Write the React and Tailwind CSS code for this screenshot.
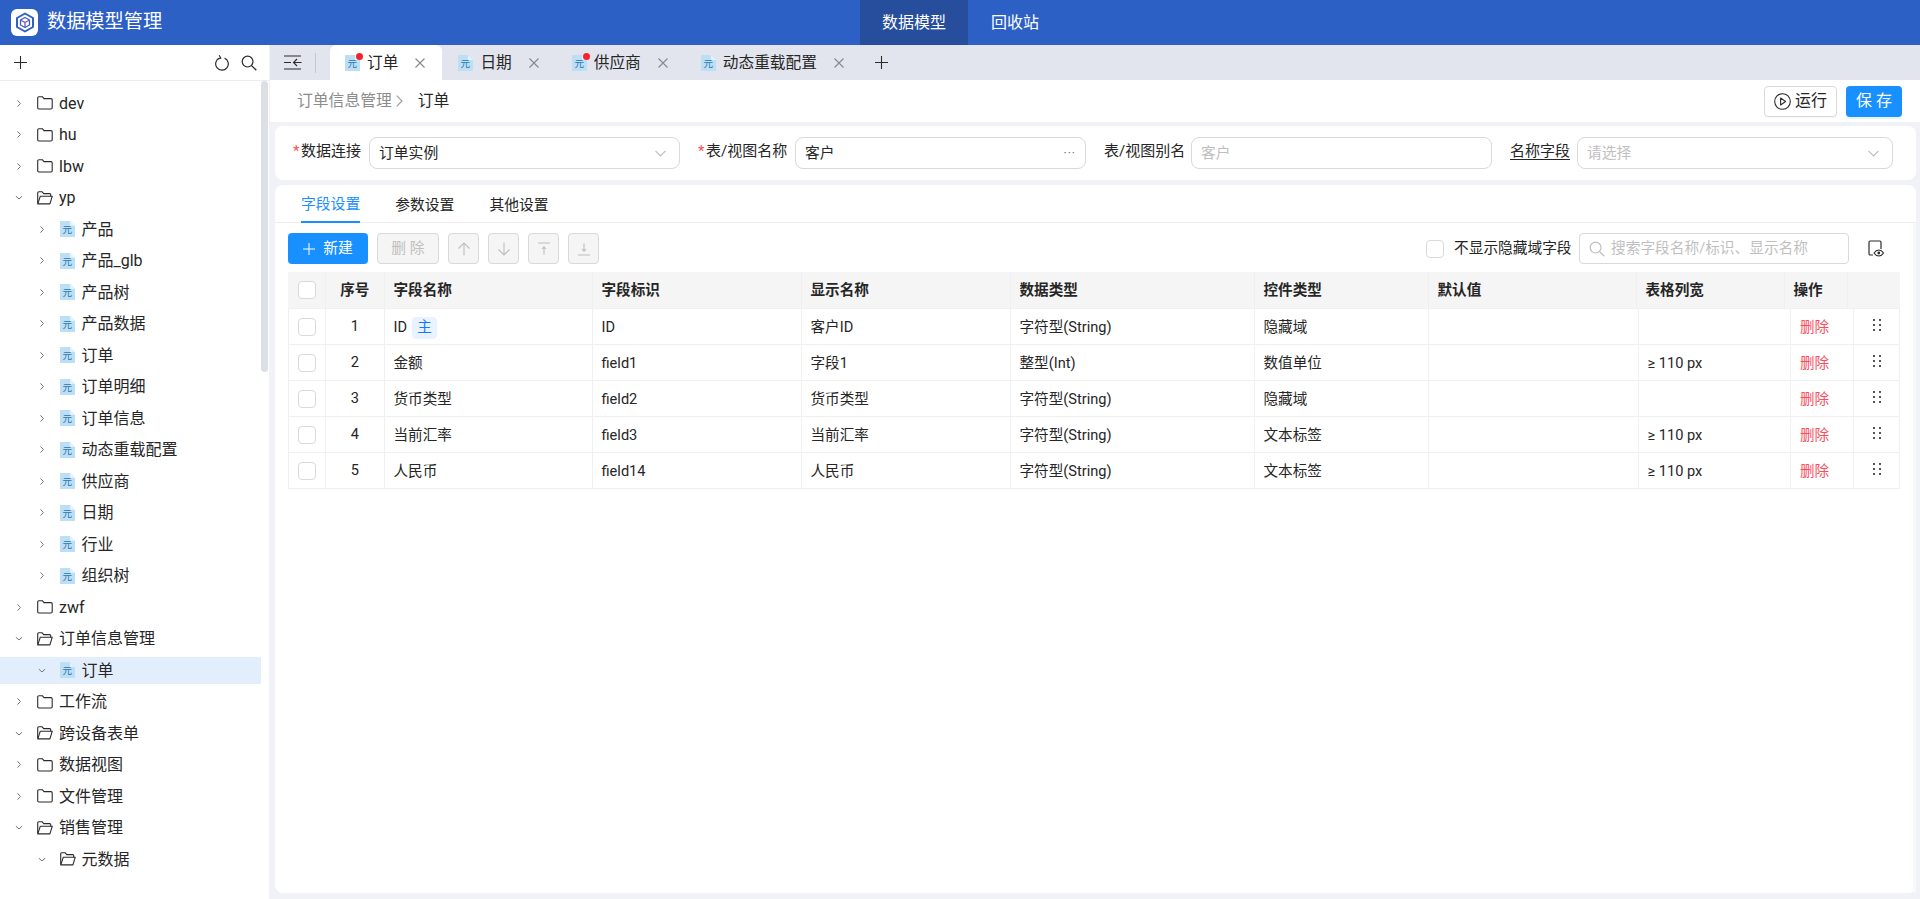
import React from 'react';

const FONT = { fontFamily: 'Roboto, "Noto Sans CJK SC", sans-serif' };

const tree = [
  { name: 'dev', level: 0, type: 'folder' },
  { name: 'hu', level: 0, type: 'folder' },
  { name: 'lbw', level: 0, type: 'folder' },
  { name: 'yp', level: 0, type: 'open' },
  { name: '产品', level: 1, type: 'file' },
  { name: '产品_glb', level: 1, type: 'file' },
  { name: '产品树', level: 1, type: 'file' },
  { name: '产品数据', level: 1, type: 'file' },
  { name: '订单', level: 1, type: 'file' },
  { name: '订单明细', level: 1, type: 'file' },
  { name: '订单信息', level: 1, type: 'file' },
  { name: '动态重载配置', level: 1, type: 'file' },
  { name: '供应商', level: 1, type: 'file' },
  { name: '日期', level: 1, type: 'file' },
  { name: '行业', level: 1, type: 'file' },
  { name: '组织树', level: 1, type: 'file' },
  { name: 'zwf', level: 0, type: 'folder' },
  { name: '订单信息管理', level: 0, type: 'open' },
  { name: '订单', level: 1, type: 'file', selected: true, down: true },
  { name: '工作流', level: 0, type: 'folder' },
  { name: '跨设备表单', level: 0, type: 'open' },
  { name: '数据视图', level: 0, type: 'folder' },
  { name: '文件管理', level: 0, type: 'folder' },
  { name: '销售管理', level: 0, type: 'open' },
  { name: '元数据', level: 1, type: 'open' },
];

const tabs = [
  { name: '订单', active: true, dot: true },
  { name: '日期' },
  { name: '供应商', dot: true },
  { name: '动态重载配置' },
];

const headers = ['字段名称', '字段标识', '显示名称', '数据类型', '控件类型', '默认值', '表格列宽', '操作'];

const rows = [
  { no: 1, name: 'ID', main: true, key: 'ID', label: '客户ID', type: '字符型(String)', ctrl: '隐藏域', width: '' },
  { no: 2, name: '金额', key: 'field1', label: '字段1', type: '整型(Int)', ctrl: '数值单位', width: '≥ 110 px' },
  { no: 3, name: '货币类型', key: 'field2', label: '货币类型', type: '字符型(String)', ctrl: '隐藏域', width: '' },
  { no: 4, name: '当前汇率', key: 'field3', label: '当前汇率', type: '字符型(String)', ctrl: '文本标签', width: '≥ 110 px' },
  { no: 5, name: '人民币', key: 'field14', label: '人民币', type: '字符型(String)', ctrl: '文本标签', width: '≥ 110 px' },
];

function Logo() {
  return (
    <div className="w-[27px] h-[27px] bg-white rounded-[6px] flex items-center justify-center">
      <svg width="20" height="21" viewBox="0 0 20 21" fill="none" strokeLinejoin="round">
        <path d="M10 1.5L18 6v9l-8 4.5L2 15V6z" stroke="#2d60c4" strokeWidth="2" />
        <path d="M10 5.5L14.5 8v5L10 15.5 5.5 13V8z" stroke="#3d5fc9" strokeWidth="1.3" />
        <path d="M5.5 8L10 10.5 14.5 8M10 10.5v5" stroke="#7a4fc0" strokeWidth="1.3" />
      </svg>
    </div>
  );
}

function Chevron({ down }) {
  return down ? (
    <svg width="9" height="9" viewBox="0 0 9 9" fill="none"><path d="M1 3l3.5 3.2L8 3" stroke="#6f7276" strokeWidth="1.1" /></svg>
  ) : (
    <svg width="9" height="9" viewBox="0 0 9 9" fill="none"><path d="M2.8 1l3.3 3.5L2.8 8" stroke="#6f7276" strokeWidth="1.1" /></svg>
  );
}

function Folder() {
  return (
    <svg width="16" height="14" viewBox="0 0 16 14" fill="none">
      <path d="M.7 2c0-.7.5-1.2 1.2-1.2h3.6L7 2.6h7c.7 0 1.2.5 1.2 1.2v8c0 .7-.5 1.2-1.2 1.2H1.9c-.7 0-1.2-.5-1.2-1.2z" stroke="#2b2b2b" strokeWidth="1.1" />
    </svg>
  );
}

function FolderOpen() {
  return (
    <svg width="16" height="14" viewBox="0 0 16 14" fill="none" strokeLinejoin="round">
      <path d="M.7 12.6V1.8C.7 1.2 1.2.8 1.8.8h3.4l1.5 1.8h6c.6 0 1 .4 1 1v1.6" stroke="#2b2b2b" strokeWidth="1.1" />
      <path d="M.8 12.9L3.3 5.2h12l-2.4 7.7z" stroke="#2b2b2b" strokeWidth="1.1" />
    </svg>
  );
}

function FileIcon() {
  return (
    <svg width="15" height="16" viewBox="0 0 15 16">
      <path d="M0 0h10l5 5v11H0z" fill="#bcdff5" />
      <path d="M10 0l5 5h-5z" fill="#e3f2fb" />
      <text x="7.2" y="12.4" textAnchor="middle" fontSize="9.5" fill="#1f75ae" fontFamily='"Noto Sans CJK SC", sans-serif'>元</text>
    </svg>
  );
}

function Close() {
  return (
    <svg width="10" height="10" viewBox="0 0 10 10" fill="none"><path d="M.5.5l9 9M9.5.5l-9 9" stroke="#85878a" strokeWidth="1.1" /></svg>
  );
}

function PlusIcon({ size = 13, color = '#2b2b2b' }) {
  return (
    <svg width={size} height={size} viewBox="0 0 13 13" fill="none"><path d="M6.5 0v13M0 6.5h13" stroke={color} strokeWidth="1.1" /></svg>
  );
}

function SearchIcon({ color = '#2b2b2b' }) {
  return (
    <svg width="16" height="16" viewBox="0 0 16 16" fill="none">
      <circle cx="6.6" cy="6.6" r="5.4" stroke={color} strokeWidth="1.2" />
      <path d="M10.6 10.6l4.7 4.7" stroke={color} strokeWidth="1.3" />
    </svg>
  );
}

function SelectArrow() {
  return (
    <svg width="11" height="7" viewBox="0 0 11 7" fill="none"><path d="M.5.8l5 5.2 5-5.2" stroke="#bdbdbd" strokeWidth="1.1" /></svg>
  );
}

function TreeRow({ item }) {
  const open = item.type === 'open';
  return (
    <div className="h-[31.5px] flex items-center">
      <div className={`w-full h-[27px] flex items-center ${item.selected ? 'bg-[#e3eefc]' : ''}`}>
        <div className={`flex items-center ${item.level ? 'pl-[37.5px]' : 'pl-[15px]'}`}>
          <span className="w-[8px] flex justify-center"><Chevron down={open || item.down} /></span>
          <span className="ml-[14px] w-[16px] flex justify-center">
            {item.type === 'file' ? <FileIcon /> : open ? <FolderOpen /> : <Folder />}
          </span>
          <span className="ml-[6px] pt-[1px] text-[16px] text-[#262626] whitespace-nowrap">{item.name}</span>
        </div>
      </div>
    </div>
  );
}

function Sidebar() {
  return (
    <aside className="w-[269px] shrink-0 bg-white flex flex-col">
      <div className="h-[36px] shrink-0 border-b border-[#ededed] flex items-center justify-between pl-[14px] pr-[12px]">
        <PlusIcon />
        <div className="flex items-center gap-[11px]">
          <svg width="15" height="17" viewBox="0 0 15 17" fill="none">
            <path d="M4.6 4a6.3 6.3 0 1 0 5 .1" stroke="#2b2b2b" strokeWidth="1.2" />
            <path d="M4.2 1.2l1.6 2.9-3 .9" stroke="#2b2b2b" strokeWidth="1.1" />
          </svg>
          <SearchIcon />
        </div>
      </div>
      <div className="flex flex-1">
        <div className="w-[261px] pt-[6.5px]">
          {tree.map((item, i) => <TreeRow key={i} item={item} />)}
        </div>
        <div className="w-[7px] h-[291px] rounded-[4px] bg-[#dcdfe5]" />
      </div>
    </aside>
  );
}

function TabBar() {
  return (
    <div className="h-[35px] shrink-0 bg-[#e2e5ed] flex items-end">
      <div className="w-[60px] h-[35px] shrink-0 flex items-center pl-[14px]">
        <svg width="18" height="15" viewBox="0 0 18 15" fill="none">
          <path d="M0 1h17M0 14h17M0 7.5h7M17.5 7.5H10M13 4l-3.5 3.5L13 11" stroke="#2b2b2b" strokeWidth="1.1" />
        </svg>
        <span className="ml-[13px] w-px h-[20px] bg-[#c4c6cb]" />
      </div>
      {tabs.map((tab, i) => (
        <div key={i} className={`h-[35px] flex items-center pr-[17px] rounded-t-[6px] ${i === 0 ? 'pl-[15px]' : 'pl-[16px]'} ${tab.active ? 'bg-white' : ''}`}>
          <span className="relative flex">
            <FileIcon />
            {tab.dot && <span className="absolute -top-[2px] -right-[3px] w-[7px] h-[7px] rounded-full bg-[#f5222d]" />}
          </span>
          <span className="ml-[7px] pt-[1px] text-[15.7px] text-[#262626] whitespace-nowrap">{tab.name}</span>
          <span className="ml-[17px] flex"><Close /></span>
        </div>
      ))}
      <div className="h-[35px] flex items-center ml-[14px]"><PlusIcon /></div>
    </div>
  );
}

function Crumb() {
  return (
    <div className="h-[42px] shrink-0 bg-white flex items-center pl-[27px] pr-[18px]">
      <span className="text-[15.8px] text-[#8c8c8c]">订单信息管理</span>
      <svg className="ml-[4px]" width="7" height="12" viewBox="0 0 7 12" fill="none"><path d="M.7.7L6 6 .7 11.3" stroke="#9a9a9a" strokeWidth="1.1" /></svg>
      <span className="ml-[15px] text-[15.8px] text-[#262626]">订单</span>
      <div className="ml-auto flex items-center gap-[9px]">
        <button className="w-[73px] h-[31px] bg-white border border-[#d9d9d9] rounded-[4px] flex items-center justify-center gap-[4px] text-[16px] text-[#262626] shadow-[0_1px_1px_rgba(0,0,0,0.03)]">
          <svg width="17" height="17" viewBox="0 0 17 17" fill="none">
            <circle cx="8.5" cy="8.5" r="7.8" stroke="#2b2b2b" strokeWidth="1.1" />
            <path d="M6.6 5l5 3.5-5 3.5z" stroke="#2b2b2b" strokeWidth="1.1" strokeLinejoin="round" />
          </svg>
          运行
        </button>
        <button className="w-[56px] h-[31px] bg-[#1890ff] rounded-[4px] text-[16px] text-white tracking-[4px] pl-[4px] shadow-[0_2px_0_rgba(5,145,255,0.1)]">保存</button>
      </div>
    </div>
  );
}

function Box({ className, children, placeholder }) {
  return (
    <div className={`h-[32px] shrink-0 bg-white border border-[#d9d9d9] rounded-[8px] flex items-center justify-between pl-[9px] pr-[13px] text-[14.8px] ${placeholder ? 'text-[#bfbfbf]' : 'text-[#262626]'} ${className}`}>
      {children}
    </div>
  );
}

function FormCard() {
  const label = 'shrink-0 text-[15px] text-[#262626] whitespace-nowrap -mt-[3px]';
  const star = 'text-[#ff4d4f] w-[8px] inline-block';
  return (
    <div className="h-[54px] shrink-0 mx-[5px] mr-[4px] mt-[4px] bg-white rounded-[8px] flex items-center pl-[18px]">
      <span className={`${label} w-[68px]`}><span className={star}>*</span>数据连接</span>
      <Box className="ml-[8px] w-[311px]"><span>订单实例</span><SelectArrow /></Box>
      <span className={`${label} ml-[18px] w-[88px]`}><span className={star}>*</span>表/视图名称</span>
      <Box className="ml-[9px] w-[291px]">
        <span>客户</span>
        <span className="text-[#6b6b6b] text-[12px] tracking-[1px] -mr-[4px]">···</span>
      </Box>
      <span className={`${label} ml-[18px] w-[80px]`}>表/视图别名</span>
      <Box className="ml-[7px] w-[301px]" placeholder><span>客户</span></Box>
      <span className={`${label} ml-[18px] w-[60px] underline underline-offset-[3px]`}>名称字段</span>
      <Box className="ml-[7px] w-[316px]" placeholder><span>请选择</span><SelectArrow /></Box>
    </div>
  );
}

function ToolBtn({ children }) {
  return (
    <button className="w-[31px] h-[31px] bg-[#f5f5f5] border border-[#d9d9d9] rounded-[4px] flex items-center justify-center">
      {children}
    </button>
  );
}

function CheckBox() {
  return <span className="block w-[18px] h-[18px] bg-white border border-[#d9d9d9] rounded-[4px]" />;
}

function Toolbar() {
  const c = '#bdbdbd';
  return (
    <div className="h-[49px] shrink-0 pl-[13px] pr-[28px] pt-[10px] flex items-start">
      <button className="w-[80px] h-[31px] bg-[#1890ff] rounded-[4px] flex items-center justify-center gap-[8px] text-[14.8px] text-white">
        <PlusIcon size={12} color="#ffffff" />
        新建
      </button>
      <button className="ml-[9px] w-[62px] h-[31px] bg-[#f5f5f5] border border-[#d9d9d9] rounded-[4px] text-[14.8px] text-[#bfbfbf]">删 除</button>
      <div className="ml-[9px] flex gap-[9px]">
        <ToolBtn>
          <svg width="14" height="14" viewBox="0 0 14 14" fill="none"><path d="M7 13.5V1M1.5 6.5L7 1l5.5 5.5" stroke={c} strokeWidth="1.1" /></svg>
        </ToolBtn>
        <ToolBtn>
          <svg width="14" height="14" viewBox="0 0 14 14" fill="none"><path d="M7 .5V13M1.5 7.5L7 13l5.5-5.5" stroke={c} strokeWidth="1.1" /></svg>
        </ToolBtn>
        <ToolBtn>
          <svg width="14" height="14" viewBox="0 0 14 14" fill="none"><path d="M1 1h12M7 12.5V5M5 7l2-2.2L9 7" stroke={c} strokeWidth="1.1" /></svg>
        </ToolBtn>
        <ToolBtn>
          <svg width="14" height="14" viewBox="0 0 14 14" fill="none"><path d="M1 13h12M7 1.5V9M5 7l2 2.2L9 7" stroke={c} strokeWidth="1.1" /></svg>
        </ToolBtn>
      </div>
      <div className="ml-auto flex items-center h-[31px]">
        <CheckBox />
        <span className="ml-[10px] w-[118px] text-[14.7px] text-[#262626] whitespace-nowrap">不显示隐藏域字段</span>
        <div className="ml-[7px] w-[270px] h-[31px] border border-[#d9d9d9] rounded-[4px] flex items-center pl-[9px] text-[14.7px] text-[#bfbfbf] whitespace-nowrap">
          <SearchIcon color="#bfbfbf" />
          <span className="ml-[6px]">搜索字段名称/标识、显示名称</span>
        </div>
        <svg className="ml-[19px]" width="17" height="17" viewBox="0 0 17 17" fill="none">
          <path d="M5 15H2.2C1.5 15 1 14.5 1 13.8V2.2C1 1.5 1.5 1 2.2 1h9.6c.7 0 1.2.5 1.2 1.2V9" stroke="#2b2b2b" strokeWidth="1.2" />
          <path d="M6 13c1.4-2 3-3 4.8-3s3.4 1 4.7 3c-1.3 2-2.9 3-4.7 3S7.4 15 6 13z" fill="#fff" stroke="#2b2b2b" strokeWidth="1.1" />
          <circle cx="10.8" cy="13" r="1.4" fill="#2b2b2b" />
        </svg>
      </div>
    </div>
  );
}

function Grip() {
  return (
    <svg className="-mt-[4px]" width="10" height="12" viewBox="0 0 10 12" fill="#555">
      <rect x="1" y="0" width="2" height="2" /><rect x="7" y="0" width="2" height="2" />
      <rect x="1" y="5" width="2" height="2" /><rect x="7" y="5" width="2" height="2" />
      <rect x="1" y="10" width="2" height="2" /><rect x="7" y="10" width="2" height="2" />
    </svg>
  );
}

function FieldTable() {
  const base = 'border-r border-[#f0f0f0] flex items-center whitespace-nowrap';
  const cell = `${base} pl-[9px] pt-[2px]`;
  return (
    <div className="ml-[13px] w-[1612px] text-[14.6px] text-[#262626]">
      <div className="grid grid-cols-[38px_58.5px_208px_209px_209px_244px_174px_208px_148px_63px_52.5px] h-[37px] bg-[#f5f5f5] border-b border-[#f0f0f0] font-semibold">
        <div className={`${base} pl-[10px]`}><CheckBox /></div>
        <div className={`${base} justify-center pt-[2px]`}>序号</div>
        {headers.map(h => <div key={h} className={cell}>{h}</div>)}
        <div />
      </div>
      {rows.map(r => (
        <div key={r.no} className="grid grid-cols-[37px_58.5px_208px_209px_209px_244px_174px_210px_152.5px_63px_45px] h-[36px] border-b border-x border-[#f0f0f0]">
          <div className={`${base} pl-[9px]`}><CheckBox /></div>
          <div className={`${base} justify-center`}>{r.no}</div>
          <div className={cell}>
            {r.name}
            {r.main && <span className="ml-[5px] w-[25px] h-[22px] rounded-[4px] bg-[#e8f3ff] text-[#1677ff] flex items-center justify-center">主</span>}
          </div>
          <div className={cell}>{r.key}</div>
          <div className={cell}>{r.label}</div>
          <div className={cell}>{r.type}</div>
          <div className={cell}>{r.ctrl}</div>
          <div className={cell} />
          <div className={cell}>{r.width}</div>
          <div className={`${cell} text-[#f5505f]`}>删除</div>
          <div className="flex items-center justify-center"><Grip /></div>
        </div>
      ))}
    </div>
  );
}

function FieldCard() {
  return (
    <div className="flex-1 mx-[5px] mr-[4px] mt-[5px] mb-[6px] bg-white rounded-[8px] flex flex-col">
      <div className="h-[38px] shrink-0 border-b border-[#eeeeee] pl-[26px] flex gap-[35px] text-[14.8px] text-[#262626]">
        <div className="h-[38px] flex items-center border-b-[2px] border-[#1890ff] text-[#1890ff] pt-[2px]">字段设置</div>
        <div className="h-[38px] flex items-center pt-[2px]">参数设置</div>
        <div className="h-[38px] flex items-center pt-[2px]">其他设置</div>
      </div>
      <div className="flex-1 flex">
        <div className="flex-1">
          <Toolbar />
          <FieldTable />
        </div>
        <div className="w-[3px] bg-[#f8f9fb]" />
      </div>
    </div>
  );
}

export default function App() {
  return (
    <div className="w-[1920px] h-[899px] flex flex-col overflow-hidden bg-[#f0f2f7]" style={FONT}>
      <header className="h-[45px] shrink-0 bg-[#2d60c4] flex items-center text-white relative">
        <div className="pl-[11px] flex items-center">
          <Logo />
          <span className="ml-[9px] text-[19.2px]">数据模型管理</span>
        </div>
        <nav className="absolute left-[860px] top-0 h-[45px] flex text-[16px]">
          <div className="w-[108px] h-[45px] bg-[#264e9c] flex items-center justify-center">数据模型</div>
          <div className="ml-[23px] h-[45px] flex items-center">回收站</div>
        </nav>
      </header>
      <div className="flex-1 flex min-h-0">
        <Sidebar />
        <main className="ml-px flex-1 flex flex-col min-w-0">
          <TabBar />
          <Crumb />
          <FormCard />
          <FieldCard />
        </main>
      </div>
    </div>
  );
}
